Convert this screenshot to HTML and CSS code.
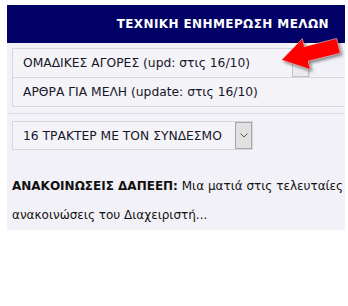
FILE: index.html
```html
<!DOCTYPE html>
<html lang="el">
<head>
<meta charset="utf-8">
<link rel="stylesheet" href="styles.css">
</head>
<body>
<div class="panel">
  <div class="header">ΤΕΧΝΙΚΗ ΕΝΗΜΕΡΩΣΗ ΜΕΛΩΝ</div>
  <div class="menu">
    <div class="select sel-1">
      <span class="label">ΟΜΑΔΙΚΕΣ ΑΓΟΡΕΣ (upd: στις 16/10)</span>
      <span class="btn btn-light"></span>
    </div>
    <div class="select sel-2">
      <span class="label">ΑΡΘΡΑ ΓΙΑ ΜΕΛΗ (update: στις 16/10)</span>
      <span class="btn btn-light"></span>
    </div>
  </div>
  <div class="sep"></div>
  <div class="menu menu-2">
    <div class="select sel-3">
      <span class="label">16 ΤΡΑΚΤΕΡ ΜΕ ΤΟΝ ΣΥΝΔΕΣΜΟ</span>
      <span class="btn btn-dark">
        <svg width="8" height="5" viewBox="0 0 8 5"><polyline points="0.5,0.5 4,4 7.5,0.5" fill="none" stroke="#555" stroke-width="1"/></svg>
      </span>
    </div>
  </div>
  <p class="news"><b>ΑΝΑΚΟΙΝΩΣΕΙΣ ΔΑΠΕΕΠ:</b> Μια ματιά στις τελευταίες<br>ανακοινώσεις του Διαχειριστή...</p>
  <svg class="arrow" width="70" height="42" viewBox="276 34 70 42">
    <polygon points="281.5,60 302.3,38.6 304.4,46.6 336.7,38.4 340.3,53.2 308.2,61.2 310.3,69.6" fill="#ff0000" stroke="#f4f4f4" stroke-width="0.5" stroke-linejoin="round"/>
  </svg>
</div>
</body>
</html>
```

FILE: styles.css
```css
html, body {
  margin: 0;
  padding: 0;
  background: #ffffff;
}

body {
  font-family: "DejaVu Sans", Verdana, sans-serif;
  color: #141414;
}

.panel {
  position: relative;
  margin: 5px 0 0 7px;
  width: 338px;
  height: 225px;
  background: #f2f1f7;
  overflow: hidden;
}

.header {
  height: 38px;
  background: #000066;
  color: #ffffff;
  font-weight: bold;
  font-size: 12px;
  letter-spacing: 0.4px;
  display: flex;
  align-items: center;
  justify-content: flex-end;
  padding-right: 16px;
  white-space: nowrap;
}

.menu {
  padding: 5px 0 0 5px;
}

.select {
  box-sizing: border-box;
  height: 30px;
  border: 1px solid #d8d7de;
  background: #f4f3f8;
  display: flex;
  align-items: center;
  justify-content: space-between;
  padding-left: 10px;
  font-size: 12.3px;
  color: #161628;
  white-space: nowrap;
}

.sel-1 { width: 298px; }
.sel-2 { width: 360px; margin-top: -1px; }
.sel-3 { width: 241px; height: 29px; }

.btn {
  box-sizing: border-box;
  width: 17px;
  height: 100%;
  display: flex;
  align-items: center;
  justify-content: center;
  flex: none;
}

.btn-light {
  background: #ebebef;
  border: 1px solid #c4c4c8;
}

.btn-dark {
  background: #e1e1e1;
  border: 1px solid #a6a6a6;
}

.sep {
  height: 1px;
  background: #dcdbe2;
  margin-top: 6px;
}

.menu-2 {
  padding-top: 7px;
}

.news {
  margin: 22px 0 0 5px;
  font-size: 12px;
  line-height: 29px;
  white-space: nowrap;
  color: #111111;
}

.arrow {
  position: absolute;
  left: 269px;
  top: 29px;
  filter: drop-shadow(2px 2px 1.5px rgba(0, 0, 0, 0.45));
}
```
